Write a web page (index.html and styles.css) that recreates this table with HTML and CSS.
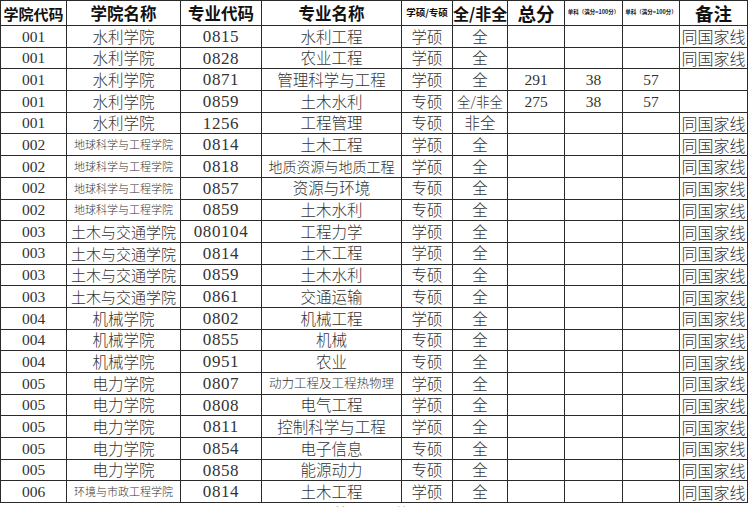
FILE: index.html
```html
<!DOCTYPE html>
<html lang="zh-CN">
<head>
<meta charset="utf-8">
<title>招生专业目录</title>
<link rel="stylesheet" href="styles.css">
</head>
<body>
<table class="grid">
<colgroup>
<col class="c1"><col class="c2"><col class="c3"><col class="c4"><col class="c5">
<col class="c6"><col class="c7"><col class="c8"><col class="c9"><col class="c10">
</colgroup>
<thead>
<tr class="head">
<th class="h-code">学院代码</th>
<th class="h-big">学院名称</th>
<th class="h-big">专业代码</th>
<th class="h-big">专业名称</th>
<th class="h-small">学硕/专硕</th>
<th class="h-mid">全/非全</th>
<th class="h-total">总分</th>
<th class="h-tiny">单科（满分=100分）</th>
<th class="h-tiny">单科（满分=100分）</th>
<th class="h-total">备注</th>
</tr>
</thead>
<tbody>
<tr><td class="num">001</td><td class="cn">水利学院</td><td class="num code">0815</td><td class="cn">水利工程</td><td class="cn">学硕</td><td class="cn">全</td><td></td><td></td><td></td><td class="note">同国家线</td></tr>
<tr><td class="num">001</td><td class="cn">水利学院</td><td class="num code">0828</td><td class="cn">农业工程</td><td class="cn">学硕</td><td class="cn">全</td><td></td><td></td><td></td><td class="note">同国家线</td></tr>
<tr><td class="num">001</td><td class="cn">水利学院</td><td class="num code">0871</td><td class="cn">管理科学与工程</td><td class="cn">学硕</td><td class="cn">全</td><td class="num">291</td><td class="num">38</td><td class="num">57</td><td class="note"></td></tr>
<tr><td class="num">001</td><td class="cn">水利学院</td><td class="num code">0859</td><td class="cn">土木水利</td><td class="cn">专硕</td><td class="cn sm">全/非全</td><td class="num">275</td><td class="num">38</td><td class="num">57</td><td class="note"></td></tr>
<tr><td class="num">001</td><td class="cn">水利学院</td><td class="num code">1256</td><td class="cn">工程管理</td><td class="cn">专硕</td><td class="cn">非全</td><td></td><td></td><td></td><td class="note">同国家线</td></tr>
<tr><td class="num">002</td><td class="cn xs">地球科学与工程学院</td><td class="num code">0814</td><td class="cn">土木工程</td><td class="cn">学硕</td><td class="cn">全</td><td></td><td></td><td></td><td class="note">同国家线</td></tr>
<tr><td class="num">002</td><td class="cn xs">地球科学与工程学院</td><td class="num code">0818</td><td class="cn md">地质资源与地质工程</td><td class="cn">学硕</td><td class="cn">全</td><td></td><td></td><td></td><td class="note">同国家线</td></tr>
<tr><td class="num">002</td><td class="cn xs">地球科学与工程学院</td><td class="num code">0857</td><td class="cn">资源与环境</td><td class="cn">专硕</td><td class="cn">全</td><td></td><td></td><td></td><td class="note">同国家线</td></tr>
<tr><td class="num">002</td><td class="cn xs">地球科学与工程学院</td><td class="num code">0859</td><td class="cn">土木水利</td><td class="cn">专硕</td><td class="cn">全</td><td></td><td></td><td></td><td class="note">同国家线</td></tr>
<tr><td class="num">003</td><td class="cn md2">土木与交通学院</td><td class="num code">080104</td><td class="cn">工程力学</td><td class="cn">学硕</td><td class="cn">全</td><td></td><td></td><td></td><td class="note">同国家线</td></tr>
<tr><td class="num">003</td><td class="cn md2">土木与交通学院</td><td class="num code">0814</td><td class="cn">土木工程</td><td class="cn">学硕</td><td class="cn">全</td><td></td><td></td><td></td><td class="note">同国家线</td></tr>
<tr><td class="num">003</td><td class="cn md2">土木与交通学院</td><td class="num code">0859</td><td class="cn">土木水利</td><td class="cn">专硕</td><td class="cn">全</td><td></td><td></td><td></td><td class="note">同国家线</td></tr>
<tr><td class="num">003</td><td class="cn md2">土木与交通学院</td><td class="num code">0861</td><td class="cn">交通运输</td><td class="cn">专硕</td><td class="cn">全</td><td></td><td></td><td></td><td class="note">同国家线</td></tr>
<tr><td class="num">004</td><td class="cn">机械学院</td><td class="num code">0802</td><td class="cn">机械工程</td><td class="cn">学硕</td><td class="cn">全</td><td></td><td></td><td></td><td class="note">同国家线</td></tr>
<tr><td class="num">004</td><td class="cn">机械学院</td><td class="num code">0855</td><td class="cn">机械</td><td class="cn">专硕</td><td class="cn">全</td><td></td><td></td><td></td><td class="note">同国家线</td></tr>
<tr><td class="num">004</td><td class="cn">机械学院</td><td class="num code">0951</td><td class="cn">农业</td><td class="cn">专硕</td><td class="cn">全</td><td></td><td></td><td></td><td class="note">同国家线</td></tr>
<tr><td class="num">005</td><td class="cn">电力学院</td><td class="num code">0807</td><td class="cn sm2">动力工程及工程热物理</td><td class="cn">学硕</td><td class="cn">全</td><td></td><td></td><td></td><td class="note">同国家线</td></tr>
<tr><td class="num">005</td><td class="cn">电力学院</td><td class="num code">0808</td><td class="cn">电气工程</td><td class="cn">学硕</td><td class="cn">全</td><td></td><td></td><td></td><td class="note">同国家线</td></tr>
<tr><td class="num">005</td><td class="cn">电力学院</td><td class="num code">0811</td><td class="cn">控制科学与工程</td><td class="cn">学硕</td><td class="cn">全</td><td></td><td></td><td></td><td class="note">同国家线</td></tr>
<tr><td class="num">005</td><td class="cn">电力学院</td><td class="num code">0854</td><td class="cn">电子信息</td><td class="cn">专硕</td><td class="cn">全</td><td></td><td></td><td></td><td class="note">同国家线</td></tr>
<tr><td class="num">005</td><td class="cn">电力学院</td><td class="num code">0858</td><td class="cn">能源动力</td><td class="cn">专硕</td><td class="cn">全</td><td></td><td></td><td></td><td class="note">同国家线</td></tr>
<tr><td class="num">006</td><td class="cn xs">环境与市政工程学院</td><td class="num code">0814</td><td class="cn">土木工程</td><td class="cn">学硕</td><td class="cn">全</td><td></td><td></td><td></td><td class="note">同国家线</td></tr>
</tbody>
</table>
<div class="footer"><span class="f1">第</span><span class="f2">页</span><span class="f3">共</span><span class="f4">页</span></div>
</body>
</html>
```

FILE: styles.css
```css
html, body {
  margin: 0;
  padding: 0;
  background: #ffffff;
  overflow: hidden;
}
body {
  width: 750px;
  height: 507px;
  font-family: "Liberation Serif", "Noto Sans CJK SC", serif;
  color: #333333;
}
.grid {
  border-collapse: collapse;
  table-layout: fixed;
  width: 748px;
  margin: 0 0 0 0;
}
.c1 { width: 66px; }
.c2 { width: 114px; }
.c3 { width: 81px; }
.c4 { width: 140px; }
.c5 { width: 51px; }
.c6 { width: 55px; }
.c7 { width: 57px; }
.c8 { width: 58px; }
.c9 { width: 57px; }
.c10 { width: 68px; }
.grid th, .grid td {
  border: 1px solid #2a2a2a;
  padding: 0;
  text-align: center;
  vertical-align: middle;
  white-space: nowrap;
  overflow: hidden;
  line-height: 1;
}
.head { height: 25px; }
.grid tbody tr { height: 21.7px; }
.grid th {
  font-family: "Noto Sans CJK SC", sans-serif;
  font-weight: 700;
  color: #111111;
}
.h-code { font-size: 15px; }
.h-big { font-size: 16.5px; }
.h-small { font-size: 9.5px; }
.h-mid { font-size: 16px; }
.h-total { font-size: 18.5px; }
.h-tiny { font-size: 5.5px; }
.num {
  font-family: "Liberation Serif", serif;
  font-size: 15.5px;
  color: #333333;
}
.code {
  font-size: 17px;
  letter-spacing: 0.6px;
}
.cn {
  font-family: "Noto Sans CJK SC", sans-serif;
  font-weight: 300;
  font-size: 15.5px;
  color: #333333;
}
.cn.xs { font-size: 11px; }
.cn.md { font-size: 14px; }
.cn.md2 { font-size: 15px; }
.cn.sm { font-size: 13.5px; }
.cn.sm2 { font-size: 12.5px; }
.note {
  font-family: "Noto Sans CJK SC", sans-serif;
  font-weight: 300;
  font-size: 16px;
  text-align: left;
  padding-left: 2px;
  color: #333333;
}
.footer {
  display: flex;
  font-family: "Noto Sans CJK SC", sans-serif;
  font-weight: 300;
  font-size: 15px;
  line-height: 1;
  color: #333333;
  padding-top: 2px;
  padding-left: 334px;
}
.f2 { margin-left: 22px; }
.f3 { margin-left: 8px; }
.f4 { margin-left: 12px; }
```
